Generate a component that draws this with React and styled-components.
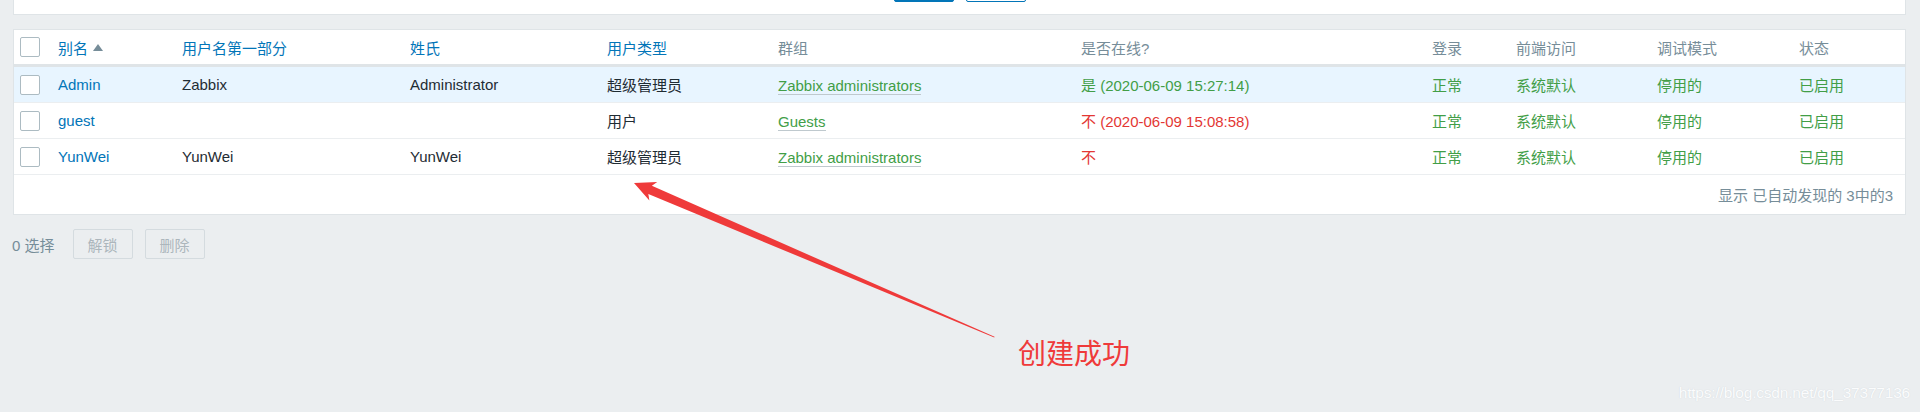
import React from 'react'
import styled, { createGlobalStyle } from 'styled-components'

const Global = createGlobalStyle`
	html, body {
		margin: 0;
		padding: 0;
		background: #ebeef0;
	}
	body {
		font-family: "Liberation Sans", "Noto Sans CJK SC", sans-serif;
		font-size: 15px;
		color: #1f2c33;
	}
`

const COLS = '37px 124px 228px 197px 171px 303px 351px 84px 141px 142px 1fr'

const users = [
	{ alias: 'Admin', name: 'Zabbix', surname: 'Administrator', type: '超级管理员', group: 'Zabbix administrators', online: true, seen: '是 (2020-06-09 15:27:14)', hover: true },
	{ alias: 'guest', name: '', surname: '', type: '用户', group: 'Guests', online: false, seen: '不 (2020-06-09 15:08:58)' },
	{ alias: 'YunWei', name: 'YunWei', surname: 'YunWei', type: '超级管理员', group: 'Zabbix administrators', online: false, seen: '不' },
]

function App() {
	return (
		<Page>
			<Global />
			<FilterCard>
				<FilterButtons>
					<FilterButton primary />
					<FilterButton />
				</FilterButtons>
			</FilterCard>

			<ListCard>
				<HeadRow>
					<Cell><Checkbox /></Cell>
					<HeadCell sortable>别名<SortArrow /></HeadCell>
					<HeadCell sortable>用户名第一部分</HeadCell>
					<HeadCell sortable>姓氏</HeadCell>
					<HeadCell sortable>用户类型</HeadCell>
					<HeadCell>群组</HeadCell>
					<HeadCell>是否在线?</HeadCell>
					<HeadCell>登录</HeadCell>
					<HeadCell>前端访问</HeadCell>
					<HeadCell>调试模式</HeadCell>
					<HeadCell>状态</HeadCell>
				</HeadRow>

				{users.map(u => (
					<Row key={u.alias} hover={u.hover}>
						<Cell><Checkbox /></Cell>
						<Cell tone="link">{u.alias}</Cell>
						<Cell>{u.name}</Cell>
						<Cell>{u.surname}</Cell>
						<Cell>{u.type}</Cell>
						<Cell><GroupLink>{u.group}</GroupLink></Cell>
						<Cell tone={u.online ? 'green' : 'red'}>{u.seen}</Cell>
						<Cell tone="green">正常</Cell>
						<Cell tone="green">系统默认</Cell>
						<Cell tone="green">停用的</Cell>
						<Cell tone="green">已启用</Cell>
					</Row>
				))}

				<Footer>显示 已自动发现的 3中的3</Footer>
			</ListCard>

			<ActionBar>
				<Selected>0 选择</Selected>
				<ActionButton disabled>解锁</ActionButton>
				<ActionButton disabled>删除</ActionButton>
			</ActionBar>

			{/* red annotation arrow pointing at the new user */}
			<Overlay width="1920" height="412" viewBox="0 0 1920 412">
				<g transform="translate(634 183) rotate(23.16)">
					<polygon
						fill="#ef3a3a"
						points="0,0 21,-10 17.5,-4.5 392,-0.4 392,0.4 17.5,4.5 21,10" />
				</g>
			</Overlay>
			<Note>创建成功</Note>
			<Watermark>https://blog.csdn.net/qq_37377136</Watermark>
		</Page>
	)
}

export default App

const Page = styled.div`
	position: relative;
	width: 1920px;
	height: 412px;
	box-sizing: border-box;
	padding: 0 14px 0 13px;
	overflow: hidden;
`

const FilterCard = styled.div`
	height: 14px;
	background: #fff;
	border: 1px solid #dfe4e7;
	border-top: none;
	overflow: hidden;
`

const FilterButtons = styled.div`
	display: flex;
	justify-content: center;
	gap: 12px;
	margin-top: -28px;
	padding-left: 1px;
`

const FilterButton = styled.div`
	width: 60px;
	height: 30px;
	box-sizing: border-box;
	border-radius: 2px;
	border: 1px solid #0275b8;
	background: ${p => (p.primary ? '#0275b8' : '#fff')};
`

const ListCard = styled.div`
	margin-top: 14px;
	background: #fff;
	border: 1px solid #dfe4e7;
`

const HeadRow = styled.div`
	display: grid;
	grid-template-columns: ${COLS};
	align-items: center;
	height: 34px;
	border-bottom: 3px solid #dfe4e7;
`

const Row = styled.div`
	display: grid;
	grid-template-columns: ${COLS};
	align-items: center;
	height: 35px;
	border-bottom: 1px solid #ebeef0;
	background: ${p => (p.hover ? '#e8f5ff' : '#fff')};
`

const toneColor = {
	link: '#0275b8',
	green: '#429e47',
	red: '#e33734',
}

const Cell = styled.div`
	display: flex;
	align-items: center;
	padding-left: 7px;
	white-space: nowrap;
	color: ${p => toneColor[p.tone] || '#1f2c33'};
`

const HeadCell = styled(Cell)`
	color: ${p => (p.sortable ? '#0275b8' : '#768d99')};
`

const SortArrow = styled.span`
	display: inline-block;
	width: 0;
	height: 0;
	margin-left: 5px;
	margin-top: 1px;
	border-left: 5px solid transparent;
	border-right: 5px solid transparent;
	border-bottom: 7px solid #768d99;
`

const Checkbox = styled.span`
	display: block;
	width: 20px;
	height: 20px;
	box-sizing: border-box;
	border: 1px solid #acbbc2;
	border-radius: 2px;
	background: #fff;
	margin-left: -1px;
`

const GroupLink = styled.span`
	color: #429e47;
	border-bottom: 1px solid #bfc9ce;
	line-height: 17px;
	margin-top: 3px;
`

const Footer = styled.div`
	display: flex;
	align-items: center;
	justify-content: flex-end;
	height: 39px;
	padding-right: 12px;
	color: #768d99;
`

const ActionBar = styled.div`
	display: flex;
	align-items: center;
	gap: 12px;
	height: 30px;
	margin-top: 14px;
`

const Selected = styled.span`
	color: #768d99;
	margin-left: -1px;
	margin-right: 6px;
`

const ActionButton = styled.button`
	width: 60px;
	height: 30px;
	border: 1px solid #d4dbdf;
	border-radius: 2px;
	background: #ebeef0;
	color: #acb6bc;
	font: inherit;
	padding: 0;
`

const Overlay = styled.svg`
	position: absolute;
	left: 0;
	top: 0;
	pointer-events: none;
`

const Note = styled.div`
	position: absolute;
	left: 1018px;
	top: 337px;
	font-family: "Noto Sans CJK SC", sans-serif;
	font-size: 28px;
	line-height: 30px;
	color: #ef3a3a;
`

const Watermark = styled.div`
	position: absolute;
	right: 10px;
	top: 384px;
	font-family: "Liberation Sans", sans-serif;
	font-size: 15.5px;
	line-height: 17px;
	letter-spacing: -0.2px;
	color: #fbfcfd;
	text-shadow: 0 0 1px rgba(150, 160, 170, 0.35);
`
